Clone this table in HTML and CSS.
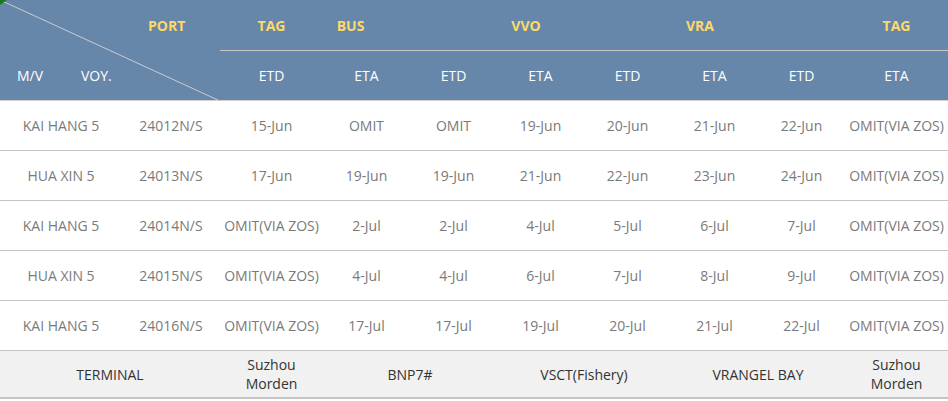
FILE: index.html
```html
<!DOCTYPE html>
<html>
<head>
<meta charset="utf-8">
<link rel="stylesheet" href="styles.css">
</head>
<body>
<table class="sched">
  <colgroup>
    <col class="c-mv"><col class="c-voy"><col class="c-wide">
    <col class="c-n"><col class="c-n"><col class="c-n"><col class="c-n"><col class="c-n"><col class="c-n">
    <col class="c-wide">
  </colgroup>
  <thead>
    <tr class="h1">
      <th class="corner" rowspan="2" colspan="2">
        <svg class="diag" width="220" height="101" viewBox="0 0 220 101"><line x1="0" y1="0" x2="220" y2="101" stroke="#c9ccd2" stroke-width="1"/><polygon points="0,0 7,0 0,5" fill="#1a7a1a"/></svg>
        <span class="port">PORT</span>
        <span class="mv">M/V</span>
        <span class="voy">VOY.</span>
      </th>
      <th class="yl">TAG</th>
      <th class="yl bus">BUS</th>
      <th class="yl shift" colspan="2">VVO</th>
      <th class="yl shift" colspan="2">VRA</th>
      <th class="yl"></th>
      <th class="yl">TAG</th>
    </tr>
    <tr class="h2">
      <th>ETD</th><th>ETA</th><th>ETD</th><th>ETA</th><th>ETD</th><th>ETA</th><th>ETD</th><th>ETA</th>
    </tr>
  </thead>
  <tbody>
    <tr><td>KAI HANG 5</td><td>24012N/S</td><td>15-Jun</td><td>OMIT</td><td>OMIT</td><td>19-Jun</td><td>20-Jun</td><td>21-Jun</td><td>22-Jun</td><td>OMIT(VIA ZOS)</td></tr>
    <tr><td>HUA XIN 5</td><td>24013N/S</td><td>17-Jun</td><td>19-Jun</td><td>19-Jun</td><td>21-Jun</td><td>22-Jun</td><td>23-Jun</td><td>24-Jun</td><td>OMIT(VIA ZOS)</td></tr>
    <tr><td>KAI HANG 5</td><td>24014N/S</td><td>OMIT(VIA ZOS)</td><td>2-Jul</td><td>2-Jul</td><td>4-Jul</td><td>5-Jul</td><td>6-Jul</td><td>7-Jul</td><td>OMIT(VIA ZOS)</td></tr>
    <tr><td>HUA XIN 5</td><td>24015N/S</td><td>OMIT(VIA ZOS)</td><td>4-Jul</td><td>4-Jul</td><td>6-Jul</td><td>7-Jul</td><td>8-Jul</td><td>9-Jul</td><td>OMIT(VIA ZOS)</td></tr>
    <tr><td>KAI HANG 5</td><td>24016N/S</td><td>OMIT(VIA ZOS)</td><td>17-Jul</td><td>17-Jul</td><td>19-Jul</td><td>20-Jul</td><td>21-Jul</td><td>22-Jul</td><td>OMIT(VIA ZOS)</td></tr>
  </tbody>
  <tfoot>
    <tr><td colspan="2">TERMINAL</td><td>Suzhou<br>Morden</td><td colspan="2">BNP7#</td><td colspan="2">VSCT(Fishery)</td><td colspan="2">VRANGEL BAY</td><td>Suzhou<br>Morden</td></tr>
  </tfoot>
</table>
</body>
</html>
```

FILE: styles.css
```css
html, body {
  margin: 0;
  padding: 0;
  background: #ffffff;
}
body {
  font-family: "Open Sans", "Noto Sans", sans-serif;
  font-size: 14px;
}
.sched {
  width: 948px;
  border-collapse: collapse;
  table-layout: fixed;
}
.c-mv { width: 122px; }
.c-voy { width: 98px; }
.c-wide { width: 103px; }
.c-n { width: 87px; }

.sched th, .sched td {
  padding: 0;
  text-align: center;
  vertical-align: middle;
  white-space: nowrap;
}
.sched thead th {
  background: #6787aa;
  font-weight: normal;
  color: #ffffff;
}
.h1 th {
  height: 50px;
  border-bottom: 1px solid #c8c8c8;
}
.h2 th {
  height: 49px;
  border-bottom: 1px solid #d0d0d0;
}
.yl {
  color: #fcd96a !important;
  font-weight: bold !important;
}
.bus { padding-right: 32px !important; }
.shift { padding-left: 58px !important; }
.corner {
  position: relative;
  border-bottom: 1px solid #d0d0d0 !important;
}
.diag {
  position: absolute;
  left: 0;
  top: 0;
  display: block;
}
.port {
  position: absolute;
  left: 148px;
  top: 16px;
  color: #fcd96a;
  font-weight: bold;
}
.mv {
  position: absolute;
  left: 17px;
  top: 66px;
}
.voy {
  position: absolute;
  left: 81px;
  top: 66px;
}
.sched tbody td {
  height: 49px;
  border-bottom: 1px solid #c4c4c4;
  color: #7a7a7a;
}
.sched tfoot td {
  height: 46px;
  background: #f1f1f1;
  color: #333333;
  line-height: 19px;
  border-bottom: 2px solid #c4c4c4;
}
```
